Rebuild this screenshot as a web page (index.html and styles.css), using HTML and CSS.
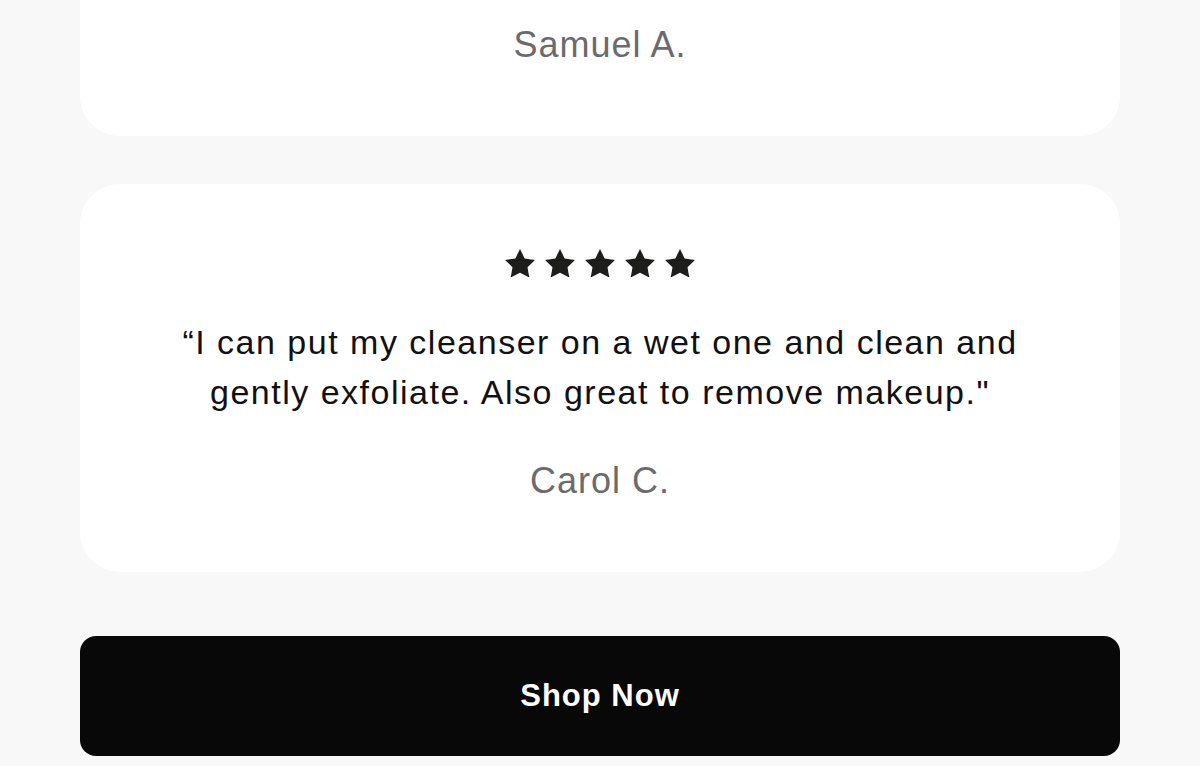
FILE: index.html
```html
<!DOCTYPE html>
<html lang="en">
<head>
  <meta charset="UTF-8" />
  <meta name="viewport" content="width=device-width, initial-scale=1.0" />
  <title>Reviews</title>
  <link rel="stylesheet" href="styles.css">
</head>
<body>
  <div class="page">
    <div class="card card-cut">
      <p class="name">Samuel A.</p>
    </div>
    <div class="card">
      <div class="stars">
        <svg viewBox="0 0 24 24"><path d="M12 2l3.09 6.26L22 9.27l-5 4.87 1.18 6.88L12 17.77l-6.18 3.25L7 14.14 2 9.27l6.91-1.01L12 2z"/></svg>
        <svg viewBox="0 0 24 24"><path d="M12 2l3.09 6.26L22 9.27l-5 4.87 1.18 6.88L12 17.77l-6.18 3.25L7 14.14 2 9.27l6.91-1.01L12 2z"/></svg>
        <svg viewBox="0 0 24 24"><path d="M12 2l3.09 6.26L22 9.27l-5 4.87 1.18 6.88L12 17.77l-6.18 3.25L7 14.14 2 9.27l6.91-1.01L12 2z"/></svg>
        <svg viewBox="0 0 24 24"><path d="M12 2l3.09 6.26L22 9.27l-5 4.87 1.18 6.88L12 17.77l-6.18 3.25L7 14.14 2 9.27l6.91-1.01L12 2z"/></svg>
        <svg viewBox="0 0 24 24"><path d="M12 2l3.09 6.26L22 9.27l-5 4.87 1.18 6.88L12 17.77l-6.18 3.25L7 14.14 2 9.27l6.91-1.01L12 2z"/></svg>
      </div>
      <p class="quote">“I can put my cleanser on a wet one and clean and gently exfoliate. Also great to remove makeup."</p>
      <p class="name">Carol C.</p>
    </div>
    <a class="shop-btn" href="#">Shop Now</a>
  </div>
</body>
</html>
```

FILE: styles.css
```css
body {
  margin: 0;
  padding: 0;
  background: #f8f8f8;
  font-family: "Liberation Sans", Arial, sans-serif;
  color: #111;
}
.page {
  margin-top: -40px;
  padding: 0 80px 10px;
  display: flex;
  flex-direction: column;
}
.card {
  background: #fff;
  border-radius: 40px;
  padding: 65px 40px 71px;
  text-align: center;
  margin-bottom: 48px;
}
.card:last-of-type {
  margin-bottom: 64px;
}
.stars {
  display: flex;
  justify-content: center;
  gap: 4px;
  height: 30px;
  margin-bottom: 38px;
}
.stars svg {
  width: 36px;
  height: 36px;
  margin-top: -3px;
  fill: #1d1d1b;
}
.quote {
  margin: 0 auto 44px;
  max-width: 900px;
  font-size: 34px;
  line-height: 50px;
  letter-spacing: 1.5px;
}
.name {
  margin: 0;
  font-size: 36px;
  line-height: 40px;
  letter-spacing: 1px;
  color: #6b6b6b;
}
.shop-btn {
  display: flex;
  align-items: center;
  justify-content: center;
  height: 120px;
  background: #080808;
  border-radius: 16px;
  color: #fff;
  font-weight: bold;
  font-size: 31px;
  letter-spacing: 1px;
  text-decoration: none;
}
```
